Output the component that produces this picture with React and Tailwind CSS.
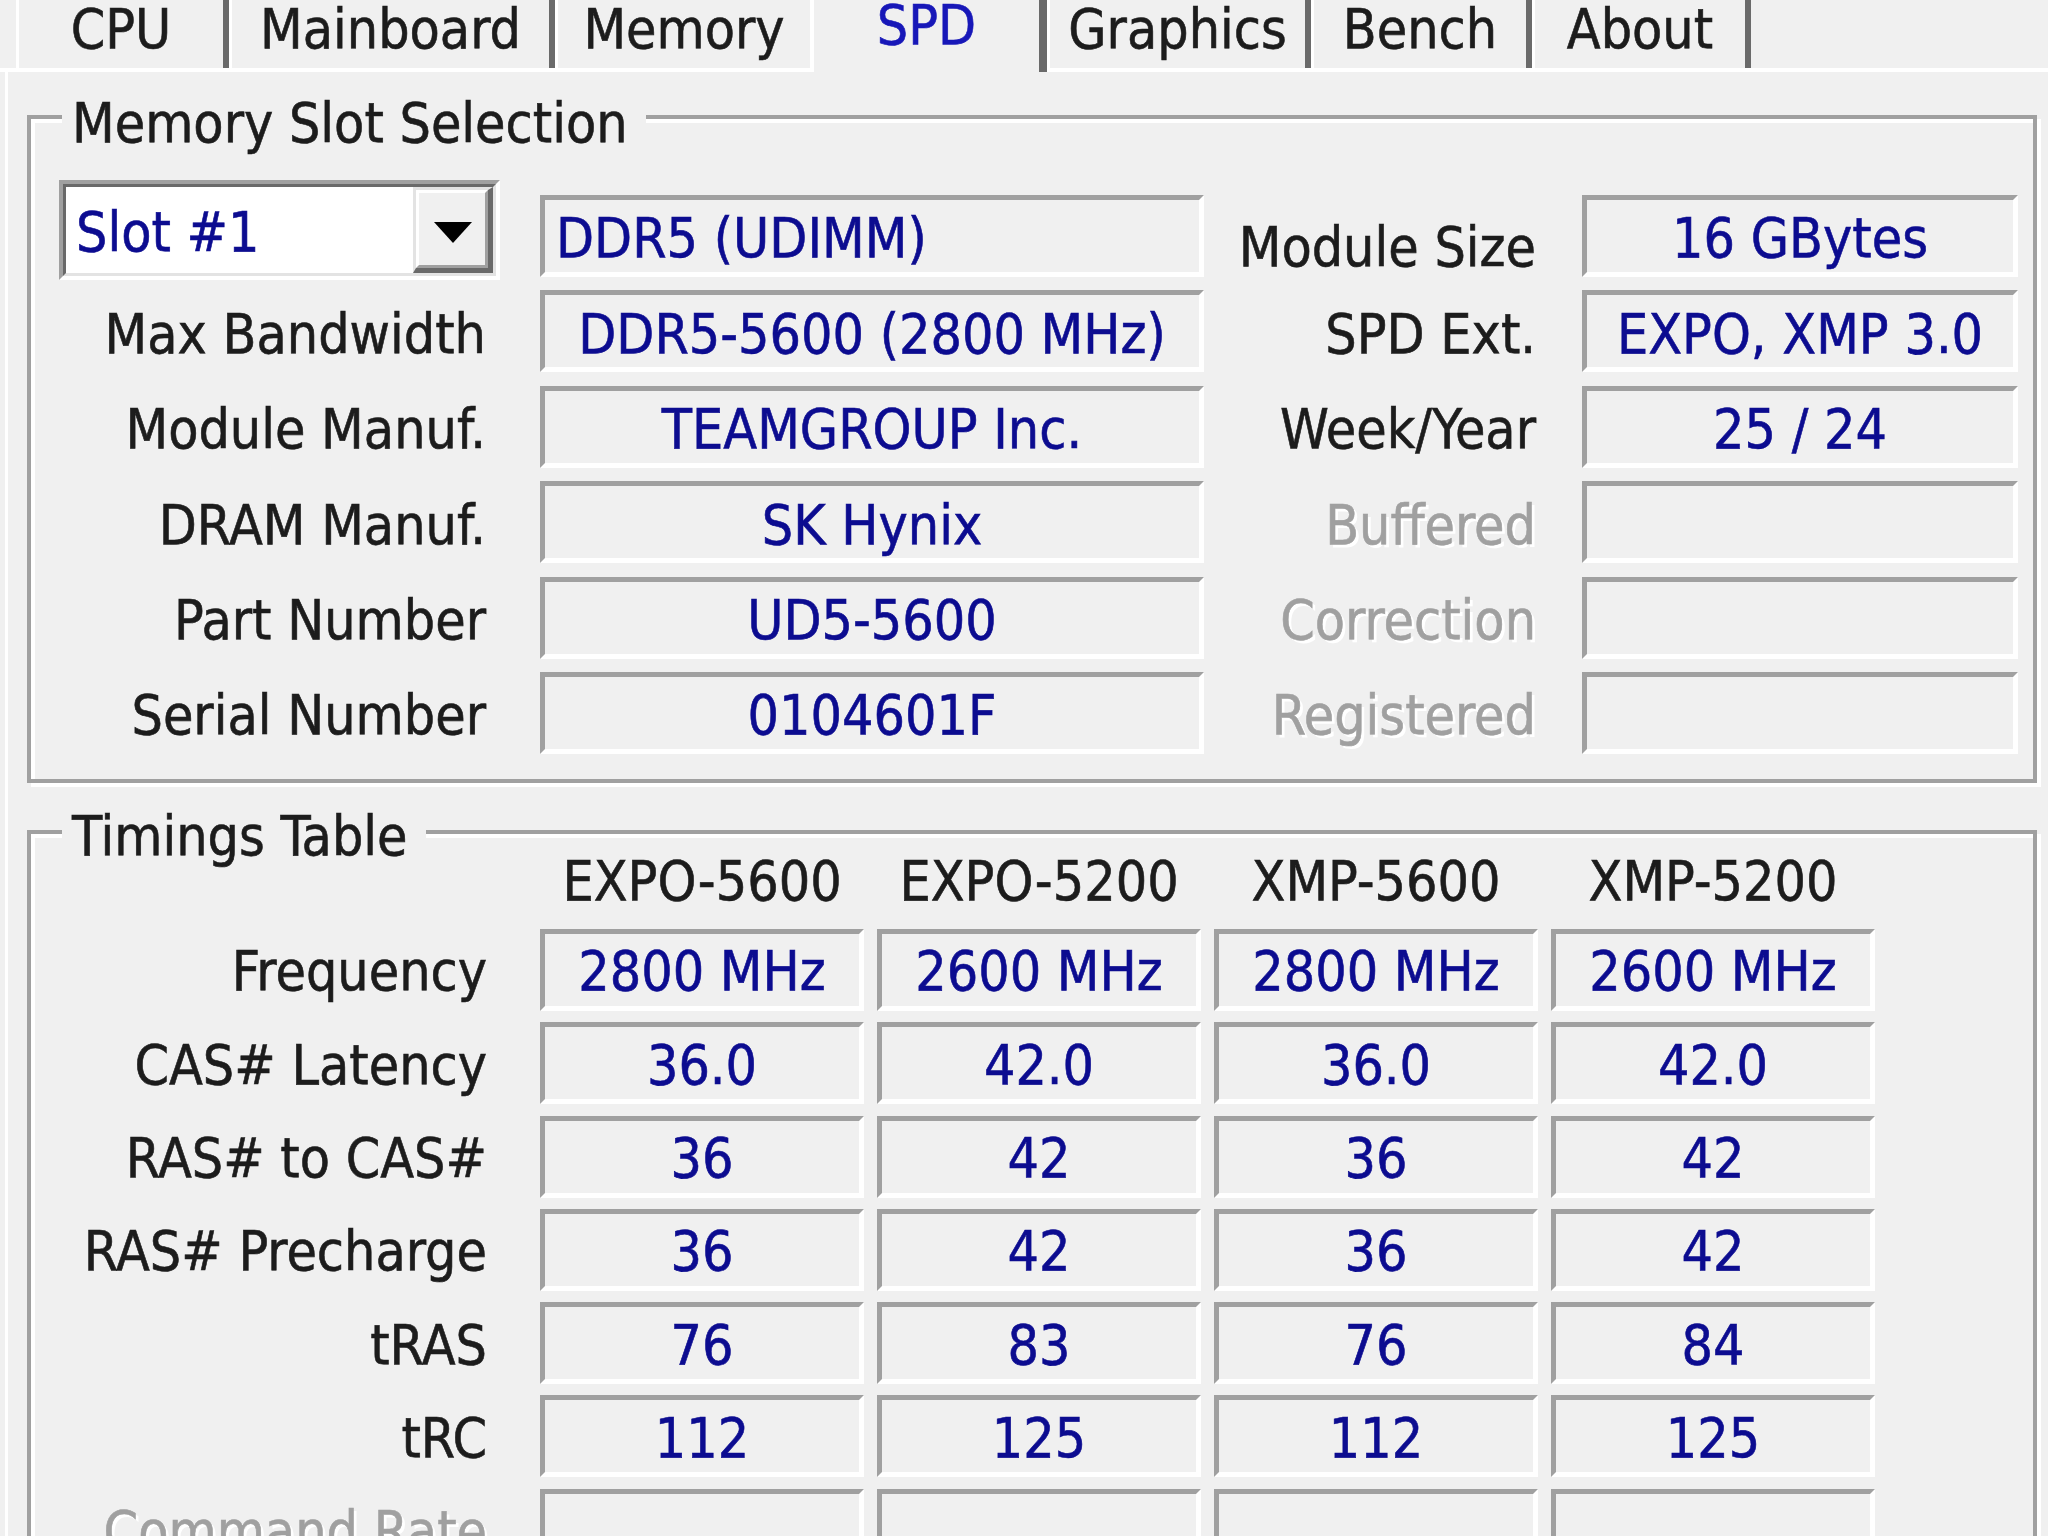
import React from "react";

const VAL = "text-[#0c0c90]";
const LBL = "text-[#1c1c1c]";
const DIS = "text-[#a0a0a0] [text-shadow:3px_3px_0_#ffffff]";

function Field({ children, left = false, className = "" }) {
  return (
    <div
      className={`h-[82px] border-t-[5px] border-l-[5px] border-b-[5px] border-r-[5px] border-t-[#a0a0a0] border-l-[#a0a0a0] border-b-white border-r-white flex items-center whitespace-nowrap pt-[6px] ${
        left ? "justify-start pl-[11px]" : "justify-center"
      } ${VAL} ${className}`}
    >
      {children}
    </div>
  );
}

function Label({ children, disabled = false, pr = "pr-[54px]", className = "" }) {
  return (
    <div
      className={`h-[82px] flex items-center justify-end whitespace-nowrap pt-[6px] ${pr} ${
        disabled ? DIS : LBL
      } ${className}`}
    >
      {children}
    </div>
  );
}

function Tab({ w, label, sep = true }) {
  return (
    <div className={`${w} h-[72px] flex flex-col`}>
      <div
        className={`h-[68px] border-l-[3px] border-l-white ${
          sep ? "border-r-[6px] border-r-[#6a6a6a]" : ""
        } flex justify-center pt-[2px] ${LBL} whitespace-nowrap`}
      >
        {label}
      </div>
      <div className="h-[4px] bg-white" />
    </div>
  );
}

function Group({ title, titleTop, children, className = "" }) {
  return (
    <div
      className={`relative w-[2010px] border-4 border-[#a0a0a0] shadow-[inset_4px_4px_0_#ffffff,4px_4px_0_#ffffff] ${className}`}
    >
      <div
        className={`absolute left-[31px] ${titleTop} pl-[10px] pr-[18px] bg-[#f0f0f0] whitespace-nowrap ${LBL}`}
      >
        {title}
      </div>
      {children}
    </div>
  );
}

function Combo() {
  return (
    <div className="self-start -mt-[15px] w-[441px] h-[100px] border-t-4 border-l-4 border-b-4 border-r-4 border-t-[#a0a0a0] border-l-[#a0a0a0] border-b-white border-r-white">
      <div className="h-full flex bg-white border-t-[3px] border-l-[3px] border-b-[3px] border-r-[3px] border-t-[#696969] border-l-[#696969] border-b-[#e3e3e3] border-r-[#e3e3e3]">
        <div className={`flex-1 flex items-center pl-[10px] pt-[4px] whitespace-nowrap ${VAL}`}>
          Slot #1
        </div>
        <div className="w-[80px] h-full border-t-[3px] border-l-[3px] border-b-[5px] border-r-[5px] border-t-[#e3e3e3] border-l-[#e3e3e3] border-b-[#696969] border-r-[#696969]">
          <div className="h-full flex items-center justify-center bg-[#f0f0f0] border-t-[3px] border-l-[3px] border-b-[3px] border-r-[3px] border-t-white border-l-white border-b-[#a0a0a0] border-r-[#a0a0a0]">
            <svg width="38" height="21" viewBox="0 0 38 21" className="mt-[6px] ml-[2px]">
              <polygon points="0,0 38,0 19,21" fill="#000000" />
            </svg>
          </div>
        </div>
      </div>
    </div>
  );
}

const timingRows = [
  ["Frequency", ["2800 MHz", "2600 MHz", "2800 MHz", "2600 MHz"]],
  ["CAS# Latency", ["36.0", "42.0", "36.0", "42.0"]],
  ["RAS# to CAS#", ["36", "42", "36", "42"]],
  ["RAS# Precharge", ["36", "42", "36", "42"]],
  ["tRAS", ["76", "83", "76", "84"]],
  ["tRC", ["112", "125", "112", "125"]],
  ["Command Rate", ["", "", "", ""], true],
];

export default function App() {
  return (
    <div className="w-[2048px] h-[1536px] overflow-hidden bg-[#f0f0f0] font-['DejaVu_Sans_Condensed','DejaVu_Sans',sans-serif] text-[55px] leading-[55px] [-webkit-text-stroke:0.6px]">
      {/* Tab strip */}
      <div className="flex h-[72px]">
        <div className="w-[16px] h-[72px] flex flex-col">
          <div className="h-[68px]" />
          <div className="h-[4px] bg-white" />
        </div>
        <Tab w="w-[213px]" label="CPU" />
        <Tab w="w-[326px]" label="Mainboard" />
        <Tab w="w-[255px]" label="Memory" sep={false} />
        <div className="w-[237px] h-[72px] border-l-4 border-l-white border-r-[8px] border-r-[#6a6a6a] flex justify-center">
          <div className="-mt-[2px] text-[#1717b8] whitespace-nowrap">SPD</div>
        </div>
        <Tab w="w-[264px]" label="Graphics" />
        <Tab w="w-[221px]" label="Bench" />
        <Tab w="w-[219px]" label="About" />
        <div className="flex-1 h-[72px] flex flex-col">
          <div className="h-[68px]" />
          <div className="h-[4px] bg-white" />
        </div>
      </div>

      {/* Body */}
      <div className="ml-[5px] border-l-[3px] border-white pl-[19px] pt-[43px] h-[1464px]">
        <Group title="Memory Slot Selection" titleTop="-top-[23px]">
          <div className="pt-[76px] pb-[25px] pl-[28px] grid grid-cols-[481px_664px_378px_436px] auto-rows-[82px] gap-y-[13.4px]">
            <Combo />
            <Field left className="!pt-[4px]">DDR5 (UDIMM)</Field>
            <Label pr="pr-[46px]" className="!pt-[22px]">Module Size</Label>
            <Field className="!pt-[4px]">16 GBytes</Field>

            <Label>Max Bandwidth</Label>
            <Field>DDR5-5600 (2800 MHz)</Field>
            <Label pr="pr-[46px]">SPD Ext.</Label>
            <Field>EXPO, XMP 3.0</Field>

            <Label>Module Manuf.</Label>
            <Field>TEAMGROUP Inc.</Field>
            <Label pr="pr-[46px]">Week/Year</Label>
            <Field>25 / 24</Field>

            <Label>DRAM Manuf.</Label>
            <Field>SK Hynix</Field>
            <Label pr="pr-[46px]" disabled>Buffered</Label>
            <Field />

            <Label>Part Number</Label>
            <Field>UD5-5600</Field>
            <Label pr="pr-[46px]" disabled>Correction</Label>
            <Field />

            <Label>Serial Number</Label>
            <Field>0104601F</Field>
            <Label pr="pr-[46px]" disabled>Registered</Label>
            <Field />
          </div>
        </Group>

        <Group title="Timings Table" titleTop="-top-[25px]" className="mt-[47px] h-[800px]">
          <div className="pt-[20px] pl-[28px]">
            <div className={`grid grid-cols-[468px_324px_324px_324px_324px] gap-x-[13px] h-[55px] ${LBL}`}>
              <div />
              <div className="text-center whitespace-nowrap">EXPO-5600</div>
              <div className="text-center whitespace-nowrap">EXPO-5200</div>
              <div className="text-center whitespace-nowrap">XMP-5600</div>
              <div className="text-center whitespace-nowrap">XMP-5200</div>
            </div>
            <div className="mt-[20px] grid grid-cols-[468px_324px_324px_324px_324px] gap-x-[13px] auto-rows-[82px] gap-y-[11.3px]">
              {timingRows.map(([name, vals, dis]) => (
                <React.Fragment key={name}>
                  <Label pr="pr-[40px]" disabled={!!dis} className="!pt-[4px]">{name}</Label>
                  {vals.map((v, i) => (
                    <Field key={i} className="!pt-[4px]">{v}</Field>
                  ))}
                </React.Fragment>
              ))}
            </div>
          </div>
        </Group>
      </div>
    </div>
  );
}
